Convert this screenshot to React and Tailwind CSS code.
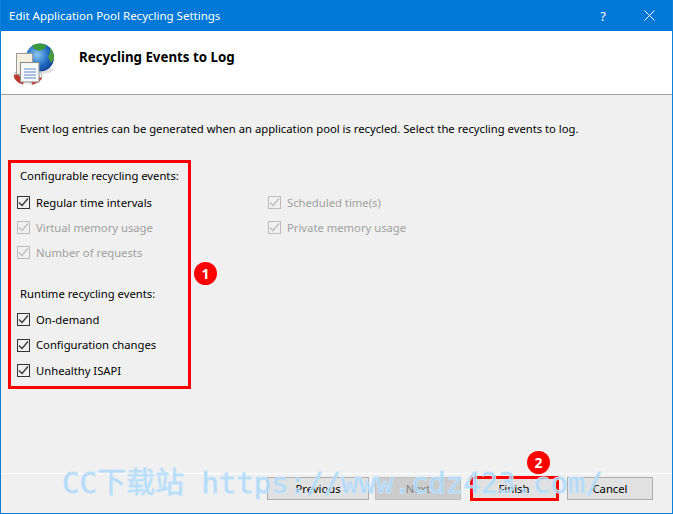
const font = { fontFamily: '"Noto Sans", "Open Sans", sans-serif' };

function Check({ label, disabled, tall }) {
  return (
    <div className={`flex items-center gap-[6px] ${tall ? "h-[26px]" : "h-[25px]"}`}>
      <span className={`flex h-[13px] w-[13px] items-center justify-center border bg-[#f0f0f0] ${disabled ? "border-[#bcbcbc]" : "border-[#333333]"}`}>
        <svg width="11" height="11" viewBox="0 0 11 11" fill="none">
          <path d="M1 5.5 L4 8.5 L10 1.5" stroke={disabled ? "#bcbcbc" : "#333333"} strokeWidth="1.2" />
        </svg>
      </span>
      <span className={disabled ? "text-[#a0a0a0]" : "text-[#000000]"}>{label}</span>
    </div>
  );
}

function Btn({ label, disabled, wide }) {
  return (
    <div className={`flex h-[23px] items-center justify-center border ${wide ? "w-[102px]" : "w-[86px]"} ${disabled ? "border-[#bfbfbf] bg-[#cccccc] text-[#838383]" : "border-[#adadad] bg-[#e1e1e1] text-[#000000]"}`}>
      {label}
    </div>
  );
}

function PoolIcon() {
  return (
    <svg width="41" height="43" viewBox="0 0 41 43" className="block">
      <defs>
        <radialGradient id="g" cx="0.4" cy="0.4" r="0.7">
          <stop offset="0" stopColor="#8cc8f2" />
          <stop offset="0.6" stopColor="#1f68c0" />
          <stop offset="1" stopColor="#0c3c8a" />
        </radialGradient>
      </defs>
      <ellipse cx="29" cy="27" rx="11" ry="4" fill="#cfcfcf" opacity="0.6" />
      <circle cx="27" cy="14.5" r="14" fill="url(#g)" />
      <path d="M19 2.5 C23 0 30 0 34 2.5 L31 6 L26 8 L21 6 Z" fill="#3c9a3c" />
      <path d="M37 5 C40 8 41 12 41 16 L38 20 L35 14 L37 10 Z" fill="#4a9a3a" />
      <ellipse cx="15" cy="33" rx="14" ry="8.5" fill="#f2f2f2" stroke="#b8b8b8" />
      <path d="M1 32 C1 38 7 42 15 42 C22 42 27 39 29 35 L25 34 C21 37 8 37 5 31 Z" fill="#c23a2e" />
      <path d="M11 37 L18 37 L19 42 L10 42 Z" fill="#f2f2f2" />
      <rect x="3.5" y="10.5" width="16" height="21" fill="#f4efdf" stroke="#9a9a9a" />
      <rect x="7.5" y="19.5" width="18.5" height="19.5" fill="#f8f8f8" stroke="#8a8a8a" />
      <path d="M11 26 H23 M11 29 H23 M11 32 H23 M11 35 H23" stroke="#5a8ac8" strokeWidth="1" />
    </svg>
  );
}

export default function App() {
  return (
    <div style={font} className="relative flex h-[514px] w-[673px] flex-col overflow-hidden border-x border-b border-x-[#0c7fdb] border-b-[#0c7fdb] bg-[#f0f0f0] text-[11.25px] leading-[16px]">
      <div className="-mx-px flex h-[31px] shrink-0 items-center justify-between bg-[#0078d7] pl-[9px] pr-[9px] text-[11.5px] text-[#ffffff]">
        <span>Edit Application Pool Recycling Settings</span>
        <div className="flex items-center gap-[38px] pr-[9px]">
          <span className="text-[13px]">?</span>
          <svg width="11" height="11" viewBox="0 0 11 11" stroke="#ffffff" strokeWidth="1" fill="none"><path d="M0.5 0.5 L10.5 10.5 M10.5 0.5 L0.5 10.5" /></svg>
        </div>
      </div>

      <div className="flex h-[64px] shrink-0 items-start border-b border-[#a0a0a0] bg-[#ffffff]">
        <div className="ml-[12px] mt-[12px] w-[66px]"><PoolIcon /></div>
        <span className="mt-[17px] text-[13.3px] font-bold leading-[18px] text-[#000000]">Recycling Events to Log</span>
      </div>

      <div className="flex flex-1 flex-col pl-[19px] pt-[26px] text-[#000000]">
        <p>Event log entries can be generated when an application pool is recycled. Select the recycling events to log.</p>
        <div className="mt-[31px] flex">
          <div className="w-[248px]">
            <div className="h-[22px]">Configurable recycling events:</div>
            <div className="-ml-[3px]">
              <Check label="Regular time intervals" />
              <Check label="Virtual memory usage" disabled />
              <Check label="Number of requests" disabled />
            </div>
            <div className="mt-[21px] h-[21px]">Runtime recycling events:</div>
            <div className="-ml-[3px]">
              <Check label="On-demand" />
              <Check label="Configuration changes" tall />
              <Check label="Unhealthy ISAPI" />
            </div>
          </div>
          <div className="pt-[22px]">
            <Check label="Scheduled time(s)" disabled />
            <Check label="Private memory usage" disabled />
          </div>
        </div>
      </div>

      <div className="flex h-[40px] shrink-0 items-start justify-end border-t border-[#ffffff] pr-[19px] pt-[3px] text-[#000000]">
        <Btn label="Previous" wide />
        <div className="w-[6px]" />
        <Btn label="Next" disabled />
        <div className="w-[10px]" />
        <Btn label="Finish" />
        <div className="w-[10px]" />
        <Btn label="Cancel" />
      </div>

      <div className="pointer-events-none absolute left-[7px] top-[160px] h-[229px] w-[183px] border-[3px] border-[#ff0000]" />
      <div className="absolute left-[193px] top-[262px] flex h-[23px] w-[23px] items-center justify-center rounded-full bg-[#ff0000] text-[14px] font-bold text-[#ffffff]">1</div>
      <div className="pointer-events-none absolute left-[469px] top-[476px] h-[25px] w-[89px] border-[3px] border-[#ff0000]" />
      <div className="absolute left-[526px] top-[451px] flex h-[23px] w-[23px] items-center justify-center rounded-full bg-[#ff0000] text-[14px] font-bold text-[#ffffff]">2</div>

      <div
        className="pointer-events-none absolute left-[61px] top-[465px] whitespace-nowrap text-[29px] leading-[36px] text-[#9fd2fa]/80 [-webkit-text-stroke:1px_#c4e3fb]"
        style={{ fontFamily: '"DejaVu Sans Mono", "Noto Sans CJK SC", monospace' }}
      >
        CC下载站 https://www.cdz423.com/
      </div>
    </div>
  );
}
